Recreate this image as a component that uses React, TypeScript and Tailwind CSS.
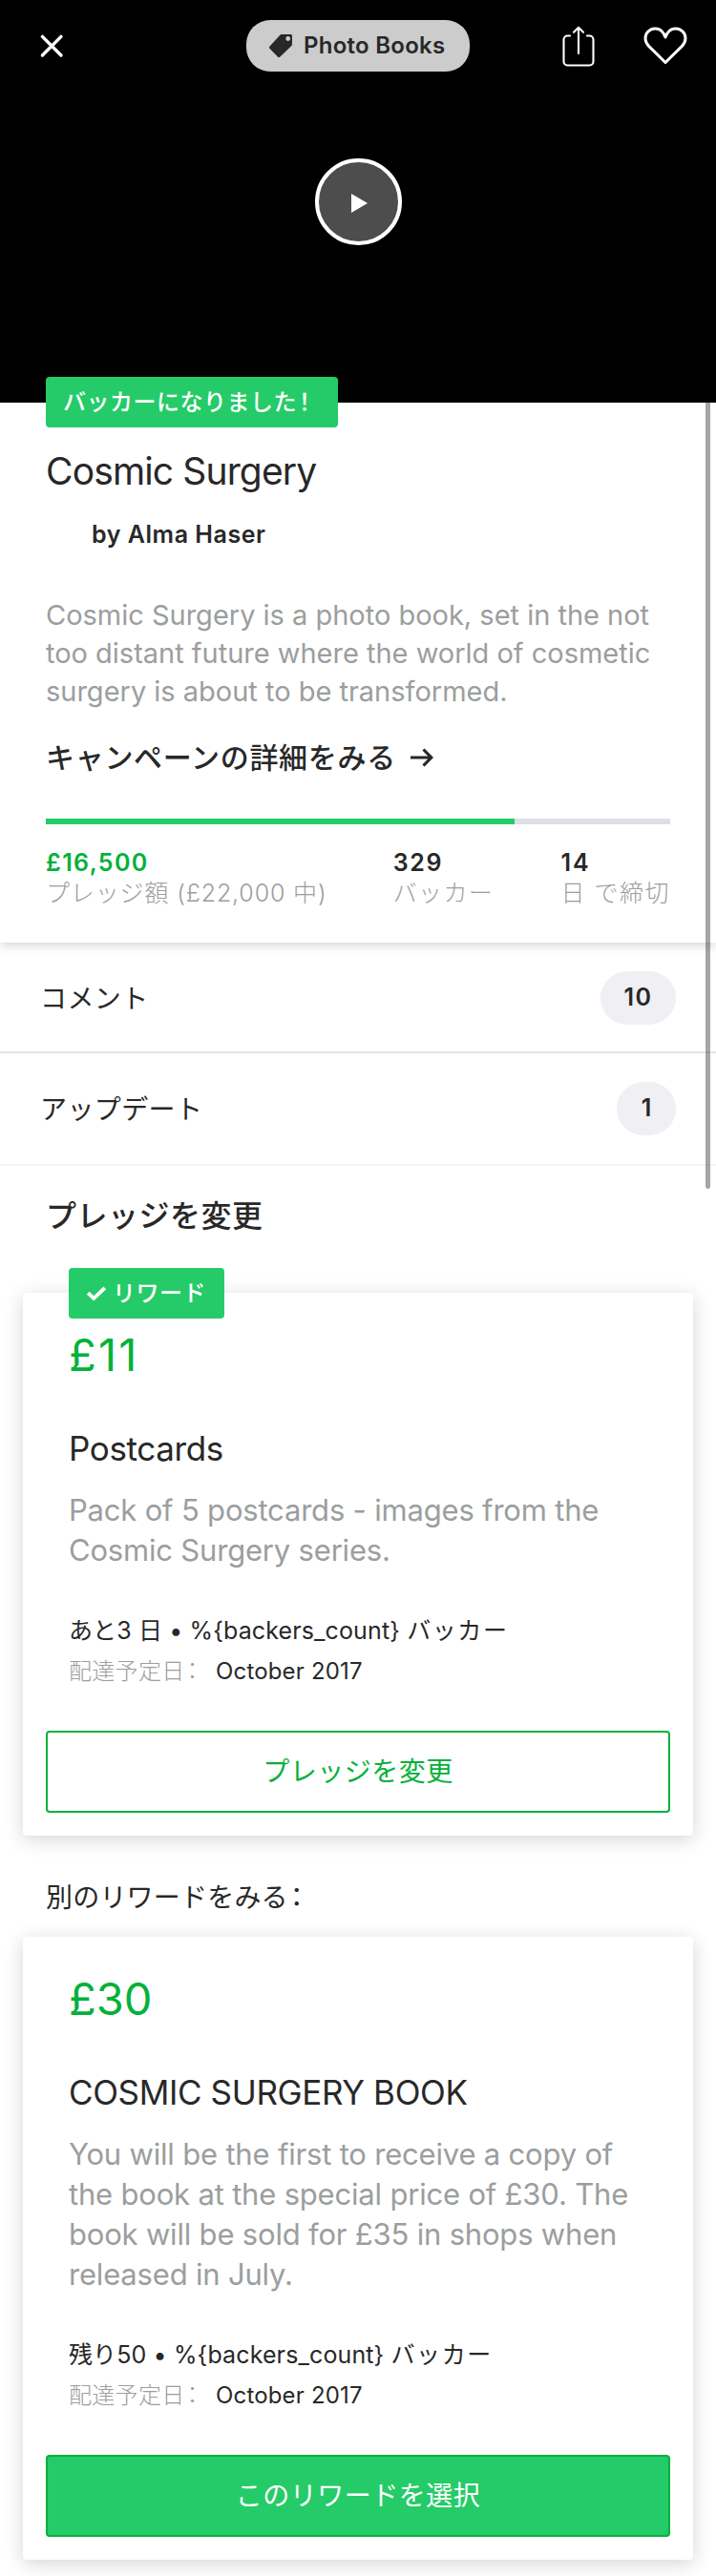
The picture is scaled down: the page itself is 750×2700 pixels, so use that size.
import React from 'react';

function CloseIcon() {
  return (
    <svg width="28" height="28" viewBox="0 0 28 28" fill="none" stroke="#fff" strokeWidth="3.4" strokeLinecap="round">
      <path d="M4.4 4.4 24 24M24 4.4 4.4 24" />
    </svg>
  );
}

function TagIcon() {
  return (
    <svg width="24" height="24" viewBox="0 0 24 24">
      <path
        fill="#282828"
        fillRule="evenodd"
        d="M13 0h9.5A1.5 1.5 0 0 1 24 1.5V10.500a2 2 0 0 1-.6 1.400L11.400 23.400a1.800 1.800 0 0 1-2.500 0L.6 15.100a1.800 1.800 0 0 1 0-2.500L11.500.6A2 2 0 0 1 13 0Zm6.700 2.100a2.400 2.400 0 1 0 0 4.800 2.400 2.400 0 0 0 0-4.800Z"
      />
    </svg>
  );
}

function ShareIcon() {
  return (
    <svg width="36" height="44" viewBox="0 0 36 44" fill="none" stroke="#fff" strokeWidth="2.100" strokeLinecap="round" strokeLinejoin="round">
      <path d="M9 11.500H6.500a4 4 0 0 0-4 4V38.500a4 4 0 0 0 4 4h23a4 4 0 0 0 4-4V15.500a4 4 0 0 0-4-4H27" />
      <path d="M18 30V3M13 7.800l5-5 5 5" />
    </svg>
  );
}

function HeartIcon() {
  return (
    <svg width="46" height="40" viewBox="0 0 46 40" fill="none" stroke="#fff" strokeWidth="3" strokeLinejoin="round">
      <path d="M23 37.500 5.600 20.400C1 15.600.9 9.300 4.700 5.300 8.600 1.100 15.400.9 19.200 4.800 21 6.600 22.200 8.500 23 11c.8-2.500 2-4.400 3.800-6.200 3.800-3.900 10.600-3.700 14.500.5 3.800 4 3.700 10.300-.9 15.100Z" />
    </svg>
  );
}

function ArrowIcon() {
  return (
    <svg width="24" height="20" viewBox="0 0 24 20" fill="none" stroke="#282828" strokeWidth="3.200">
      <path d="M0 10h22M13.500 1.500l8.300 8.500-8.300 8.500" />
    </svg>
  );
}

function CheckIcon() {
  return (
    <svg width="20" height="16" viewBox="0 0 20 16" fill="none" stroke="#fff" strokeWidth="3.800">
      <path d="M1.200 7.200l6 5.600L18.800 2" />
    </svg>
  );
}

function CountRow({ label, count, last }: { label: string; count: string; last?: boolean }) {
  return (
    <div
      className={
        last
          ? 'flex h-[118px] items-center justify-between border-b-2 border-[#f4f4f4] px-[42px]'
          : 'flex h-[116px] items-center justify-between border-b-2 border-[#e6e6e8] px-[42px] pt-[2px]'
      }
    >
      <span className="pt-[2px] text-[28px] tracking-[0.400px]">{label}</span>
      <span
        className={
          last
            ? 'flex h-14 w-[62px] items-center justify-center rounded-full bg-[#efeff4] text-[25px] font-semibold'
            : 'flex h-14 w-[79px] items-center justify-center rounded-full bg-[#efeff4] text-[25px] font-semibold tracking-[1.500px]'
        }
      >
        {count}
      </span>
    </div>
  );
}

type RewardProps = {
  amount: string;
  amountClass?: string;
  title: string;
  lines: string[];
  remaining: string;
  action: string;
  backed?: boolean;
};

function RewardCard({ amount, amountClass, title, lines, remaining, action, backed }: RewardProps) {
  return (
    <article className="relative mx-6 rounded-[4px] bg-white px-6 pt-[37px] pb-6 shadow-[0_4px_20px_rgba(0,0,0,0.17)]">
      {backed && (
        <div className="absolute top-[-26px] left-12 flex h-[53px] w-[163px] items-center rounded-[4px] bg-[#25cb68] pl-[19px] text-white">
          <CheckIcon />
          <span className="ml-[7px] text-[24px] font-medium tracking-[0.500px]">リワード</span>
        </div>
      )}
      <div className="px-6">
        <div className={`text-[47px] leading-[56px] text-[#05b13a] ${amountClass ?? ''}`}>{amount}</div>
        <h3 className="mt-12 text-[35px] leading-[44px] tracking-[-0.370px]">{title}</h3>
        <p className="mt-[22px] text-[31px] leading-[42px] tracking-[-0.190px] whitespace-nowrap text-[#9b9e9e]">
          {lines.map((line) => (
            <span key={line} className="block">{line}</span>
          ))}
        </p>
        <div className="mt-[43px] text-[25px] leading-10 tracking-[0.120px] whitespace-nowrap">
          {remaining} • {'%{backers_count}'} <span className="tracking-[1.600px]">バッカー</span>
        </div>
        <div className="mt-[3px] flex text-[24px] leading-10 whitespace-nowrap">
          <span className="w-[154px] font-light tracking-[0.300px] text-[#9b9e9e]">
            配達予定日<span className="-ml-1">：</span>
          </span>
          <span className="tracking-[0.170px]">October 2017</span>
        </div>
      </div>
      <button
        className={
          backed
            ? 'mt-[42px] flex h-[86px] w-full items-center justify-center rounded-[4px] border-2 border-[#05b13a] bg-white text-[28px] tracking-[0.500px] text-[#05b13a]'
            : 'mt-[42px] flex h-[86px] w-full items-center justify-center rounded-[4px] border-2 border-[#05b13a] bg-[#25cb68] text-[28px] tracking-[0.500px] text-white'
        }
      >
        {action}
      </button>
    </article>
  );
}

export default function App() {
  return (
    <div
      lang="ja"
      className="relative h-[2700px] w-[750px] overflow-hidden bg-white font-[Inter,'Noto_Sans_CJK_JP',sans-serif] text-[#282828]"
    >
      <header className="h-[422px] bg-black">
        <div className="flex h-24 items-center pl-10">
          <CloseIcon />
          <div className="ml-[190px] flex h-[54px] w-[234px] items-center rounded-[25px] bg-[#cccccc] pl-6">
            <TagIcon />
            <span className="ml-3 text-[24px] font-semibold tracking-[0.260px] whitespace-nowrap">Photo Books</span>
          </div>
          <div className="ml-24 flex items-center gap-[50px]">
            <ShareIcon />
            <HeartIcon />
          </div>
        </div>
        <div className="mx-auto mt-[70px] flex size-[91px] items-center justify-center rounded-full border-4 border-white bg-[#4d4d4d]">
          <svg width="18" height="20" viewBox="0 0 18 20" className="mt-[3px] ml-[2px]">
            <path d="M1 0v20l17-10Z" fill="#fff" />
          </svg>
        </div>
      </header>

      <section className="relative h-[566px] bg-white px-12 shadow-[0_3px_10px_rgba(0,0,0,0.17)]">
        <div className="flex">
          <div className="-mt-[27px] flex h-[53px] w-[306px] items-center rounded-[4px] bg-[#25cb68] pl-[18px] text-[24px] font-medium tracking-[0.500px] whitespace-nowrap text-white">
            バッカーになりました<span className="-ml-1">！</span>
          </div>
        </div>
        <h1 className="mt-[22px] text-[39px] leading-[48px] tracking-[-0.860px]">Cosmic Surgery</h1>
        <div className="mt-[26px] pl-[48px] text-[25px] leading-8 font-semibold tracking-[0.540px]">by Alma Haser</div>
        <p className="mt-[49px] text-[29px] leading-10 tracking-[-0.010px] whitespace-nowrap text-[#9b9e9e]">
          <span className="block">Cosmic Surgery is a photo book, set in the not</span>
          <span className="block">too distant future where the world of cosmetic</span>
          <span className="block">surgery is about to be transformed.</span>
        </p>
        <div className="mt-[29px] flex h-10 items-center text-[30px] font-medium">
          <span className="mr-[15px] tracking-[0.700px]">キャンペーンの詳細をみる</span>
          <ArrowIcon />
        </div>
        <div className="mt-11 h-[6px] bg-[#dcdee8]">
          <div className="h-full w-3/4 bg-[#25cb68]" />
        </div>
        <div className="mt-6 flex text-[25px] leading-8 whitespace-nowrap">
          <div className="w-[364px]">
            <div className="font-semibold tracking-[1.400px] text-[#05b13a]">£16,500</div>
            <div className="font-light tracking-[0.850px] text-[#9b9e9e]">プレッジ額 (£22,000 中)</div>
          </div>
          <div className="w-[176px]">
            <div className="font-semibold tracking-[1.700px]">329</div>
            <div className="font-light tracking-[1.400px] text-[#9b9e9e]">バッカー</div>
          </div>
          <div>
            <div className="font-semibold tracking-[2px]">14</div>
            <div className="font-light tracking-[1.500px] text-[#9b9e9e]">日 で締切</div>
          </div>
        </div>
      </section>

      <CountRow label="コメント" count="10" />
      <CountRow label="アップデート" count="1" last />

      <h2 className="mt-[33px] mb-[60px] px-12 text-[32px] leading-10 font-medium tracking-[0.500px]">プレッジを変更</h2>
      <RewardCard
        backed
        amount="£11"
        amountClass="tracking-[2.200px]"
        title="Postcards"
        lines={['Pack of 5 postcards - images from the', 'Cosmic Surgery series.']}
        remaining="あと3 日"
        action="プレッジを変更"
      />
      <div className="mt-[45px] mb-[21px] px-12 text-[28px] leading-10 tracking-[0.200px]">
        別のリワードをみる<span className="-ml-[5px]">：</span>
      </div>
      <RewardCard
        amount="£30"
        title="COSMIC SURGERY BOOK"
        lines={[
          'You will be the first to receive a copy of',
          'the book at the special price of £30. The',
          'book will be sold for £35 in shops when',
          'released in July.',
        ]}
        remaining="残り50"
        action="このリワードを選択"
      />

      <div className="absolute top-[400px] right-[6px] h-[846px] w-[5px] rounded-full bg-black/35" />
    </div>
  );
}
